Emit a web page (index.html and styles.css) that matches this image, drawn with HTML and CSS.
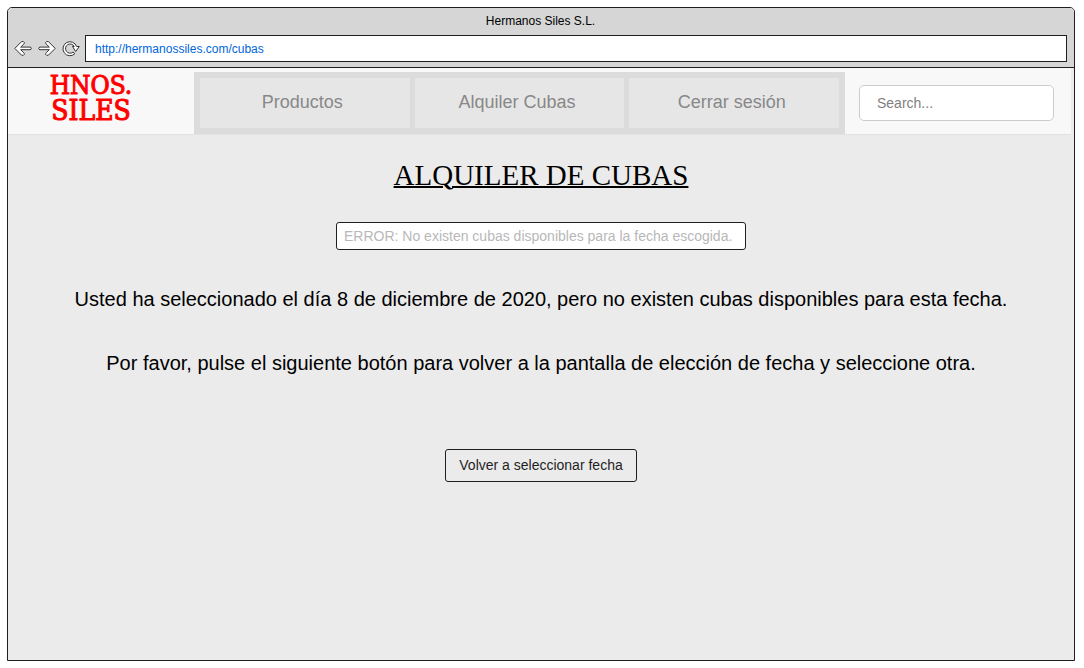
FILE: index.html
```html
<!DOCTYPE html>
<html lang="es">
<head>
<meta charset="utf-8">
<title>Hermanos Siles S.L.</title>
<link rel="stylesheet" href="styles.css">
</head>
<body>
<div class="window">
  <header class="chrome">
    <div class="window-title">Hermanos Siles S.L.</div>
    <div class="toolbar">
      <button class="tool" type="button" aria-label="Atrás">
        <svg viewBox="0 0 18 16" width="18" height="16"><path d="M7.500 0.700Q9.500 -0.300 10.300 1.500Q10.500 2.300 9.800 3L6.700 6.100H16Q17.300 6.300 17.300 7.400Q17.300 8.600 16 8.700H6.700L9.800 11.800Q10.500 12.500 10.300 13.300Q9.500 15.200 7.500 14.100L0.800 7.400Z"/></svg>
      </button>
      <button class="tool" type="button" aria-label="Adelante">
        <svg viewBox="0 0 18 16" width="18" height="16"><path d="M10.500 0.700Q8.500 -0.300 7.700 1.500Q7.500 2.300 8.200 3L11.300 6.100H2Q0.700 6.300 0.700 7.400Q0.700 8.600 2 8.700H11.300L8.200 11.800Q7.500 12.500 7.700 13.300Q8.500 15.200 10.500 14.100L17.200 7.400Z"/></svg>
      </button>
      <button class="tool" type="button" aria-label="Recargar">
        <svg viewBox="0 0 18 16" width="18" height="16"><path d="M14.600 5.500A7 7 0 1 0 12.700 12.900L11.200 11A4.600 4.600 0 1 1 12.200 5.500H10.500L13.700 10.500L17.300 5.500Z"/></svg>
      </button>
      <input class="address" type="text" aria-label="Dirección" value="http://hermanossiles.com/cubas">
    </div>
  </header>
  <div class="page">
    <div class="navbar">
      <a class="logo" href="#"><span>HNOS.</span><span class="logo-name">SILES</span></a>
      <nav class="menu">
        <a href="#">Productos</a>
        <a href="#">Alquiler Cubas</a>
        <a href="#">Cerrar sesión</a>
      </nav>
      <div class="search-area">
        <input class="search" type="search" placeholder="Search..." aria-label="Buscar">
      </div>
    </div>
    <main class="content">
      <h1>ALQUILER DE CUBAS</h1>
      <input class="error" type="text" readonly aria-label="Error" value="ERROR: No existen cubas disponibles para la fecha escogida.">
      <p>Usted ha seleccionado el día 8 de diciembre de 2020, pero no existen cubas disponibles para esta fecha.</p>
      <p>Por favor, pulse el siguiente botón para volver a la pantalla de elección de fecha y seleccione otra.</p>
      <button class="back" type="button">Volver a seleccionar fecha</button>
    </main>
  </div>
</div>
</body>
</html>
```
FILE: styles.css
```css
* { box-sizing: border-box; }

body {
  margin: 0;
  padding: 7px 9px 7px 7px;
  min-height: 100vh;
  display: flex;
  background: #fff;
  color: #000;
  font-family: "Liberation Sans", Arial, sans-serif;
}

input, button { font-family: inherit; margin: 0; }

.window {
  flex: 1;
  display: flex;
  flex-direction: column;
  border: 1px solid #1f1f1f;
  border-radius: 5px 5px 0 0;
  background: #ebebeb;
  overflow: hidden;
}

.chrome {
  background: #d6d6d6;
  border-bottom: 1px solid #1f1f1f;
  padding: 5px 7px 5px 6px;
}

.window-title {
  font-size: 12px;
  line-height: 16px;
  text-align: center;
  margin-bottom: 6px;
}

.toolbar { display: flex; align-items: center; gap: 6px; }

.tool {
  border: 0;
  padding: 0;
  background: none;
  width: 18px;
  height: 16px;
}

.tool svg {
  display: block;
  overflow: visible;
  fill: #fff;
  stroke: #333;
  stroke-width: 1;
  stroke-linejoin: round;
}

.address {
  flex: 1;
  min-width: 0;
  height: 27px;
  margin-left: -1px;
  border: 1px solid #1f1f1f;
  background: #fff;
  padding: 0 9px;
  font-size: 12px;
  color: #0066d9;
}

.page { flex: 1; }

.navbar {
  display: flex;
  align-items: stretch;
  margin-right: 3px;
  background: #f8f8f8;
  border-bottom: 1px solid #e2e2e2;
}

.logo {
  flex: 0 0 186px;
  padding: 4px 20px 8px 0;
  display: flex;
  flex-direction: column;
  align-items: center;
  font-family: "DejaVu Serif Condensed", "DejaVu Serif", serif;
  font-size: 26px;
  line-height: 26px;
  color: #f00;
  -webkit-text-stroke: 1px #f00;
  text-decoration: none;
}

.logo-name { font-size: 28px; }

.menu {
  flex: 1;
  display: grid;
  grid-template-columns: repeat(3, 1fr);
  gap: 5px;
  margin-top: 4px;
  padding: 6px;
  background: #dcdcdc;
}

.menu a {
  display: flex;
  align-items: center;
  justify-content: center;
  height: 50px;
  padding: 0 5px 2px 0;
  background: #e6e6e6;
  color: #888;
  font-size: 18px;
  text-decoration: none;
}

.search-area { flex: 0 0 226px; padding: 17px 17px 0 14px; }

.search {
  display: block;
  width: 100%;
  height: 36px;
  border: 1px solid #ccc;
  border-radius: 5px;
  background: #fff;
  padding: 0 17px;
  font-size: 14px;
}

.search::placeholder { color: #808080; }

.content {
  display: flex;
  flex-direction: column;
  align-items: center;
  padding: 20px 16px;
}

h1 {
  margin: 0 0 27px;
  font-family: "Liberation Serif", "Times New Roman", serif;
  font-size: 29px;
  line-height: 40px;
  font-weight: 400;
  text-decoration: underline;
  text-decoration-thickness: 2px;
}

.error {
  width: 410px;
  max-width: 100%;
  height: 28px;
  margin-bottom: 33px;
  border: 1px solid #1f1f1f;
  border-radius: 3px;
  background: #fff;
  padding: 0 7px;
  font-size: 14px;
  color: #b8b8b8;
}

p {
  margin: 0 0 32px;
  font-size: 20px;
  line-height: 32px;
  text-align: center;
}

.back {
  margin-top: 38px;
  height: 33px;
  padding: 0 13px 2px;
  border: 1px solid #1f1f1f;
  border-radius: 3px;
  background: transparent;
  color: #1f1f1f;
  font-size: 14px;
}
```
